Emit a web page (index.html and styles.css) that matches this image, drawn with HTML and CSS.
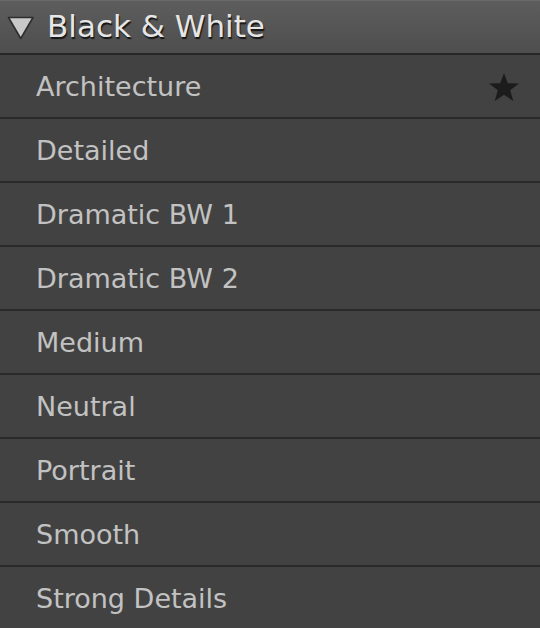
FILE: index.html
```html
<!DOCTYPE html>
<html>
<head>
<meta charset="utf-8">
<link rel="stylesheet" href="styles.css">
</head>
<body>
<div class="panel">
  <div class="header">
    <svg class="tri" width="28" height="24" viewBox="0 0 28 24"><polygon points="1.5,1.5 26,1.5 13.75,22.5" fill="#c9c9c9" stroke="#2e2e2e" stroke-width="1.6" stroke-linejoin="round"/></svg>
    <span class="title">Black &amp; White</span>
  </div>
  <ul class="list">
    <li class="row"><span>Architecture</span><svg class="star" width="32" height="30" viewBox="0 0 32 30"><polygon points="16,1 19.8,11.3 31,11.6 22.2,18.3 25.3,29 16,22.8 6.7,29 9.8,18.3 1,11.6 12.2,11.3" fill="#1c1c1c"/></svg></li>
    <li class="row"><span>Detailed</span></li>
    <li class="row"><span>Dramatic BW 1</span></li>
    <li class="row"><span>Dramatic BW 2</span></li>
    <li class="row"><span>Medium</span></li>
    <li class="row"><span>Neutral</span></li>
    <li class="row"><span>Portrait</span></li>
    <li class="row"><span>Smooth</span></li>
    <li class="row"><span>Strong Details</span></li>
  </ul>
</div>
</body>
</html>
```
FILE: styles.css
```css
html, body { margin: 0; padding: 0; background: #424242; }
body { width: 540px; height: 628px; overflow: hidden; font-family: "DejaVu Sans", "Liberation Sans", sans-serif; }
.panel { width: 540px; }
.header {
  box-sizing: border-box;
  height: 55px;
  border-top: 1px solid #6a6a6a;
  border-bottom: 2px solid #262626;
  background: linear-gradient(#5d5d5d, #4e4e4e);
  display: flex;
  align-items: center;
  padding-left: 7px;
  gap: 12px;
}
.tri { margin-top: 1px; }
.title {
  font-size: 31px;
  color: #e6e6e6;
  text-shadow: 1px 2px 1px #151515;
  margin-top: -2px;
}
.list { list-style: none; margin: 0; padding: 0; }
.row {
  height: 64px;
  box-sizing: border-box;
  border-bottom: 2px solid #2a2a2a;
  display: flex;
  align-items: center;
  justify-content: space-between;
  padding: 0 20px 0 36px;
  color: #c2c2c2;
  font-size: 27px;
}
.row:first-child { border-top: 0; }
.row span { margin-top: 0px; }
.star { margin-top: 2px; }
```
